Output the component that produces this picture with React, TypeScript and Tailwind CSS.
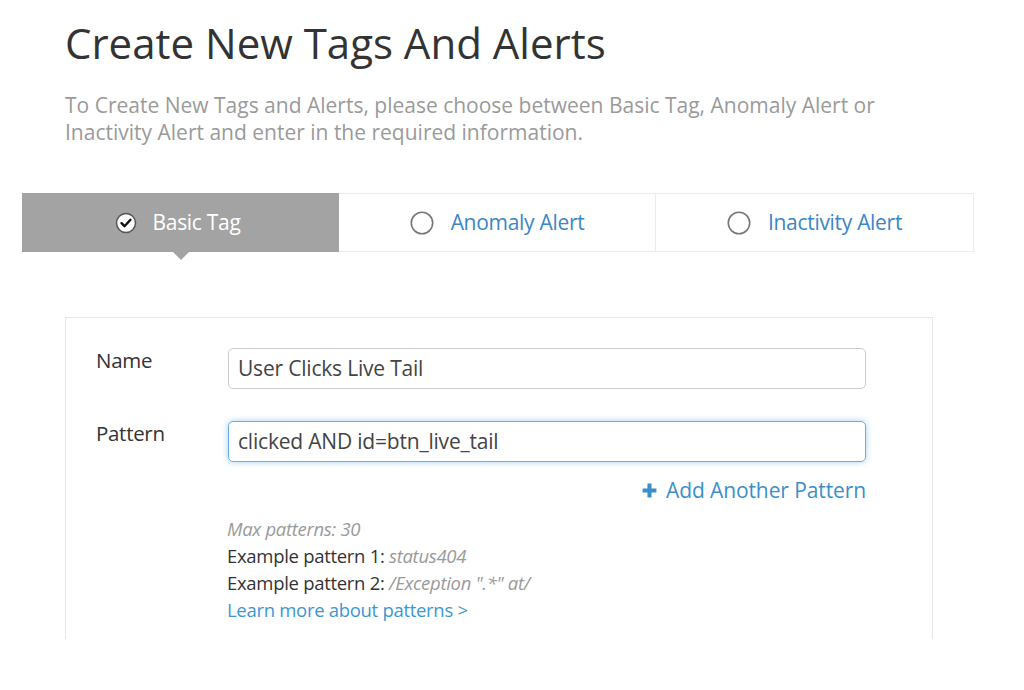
import React from 'react';

const CheckCircle = () => (
  <svg width="22" height="22" viewBox="0 0 22 22" className="mr-[16px]">
    <circle cx="11" cy="11" r="9.5" fill="#ffffff" stroke="#555555" strokeWidth="1.5" />
    <path d="M6.5 11.2l3 3 6-6.4" fill="none" stroke="#111111" strokeWidth="2.4" strokeLinecap="round" strokeLinejoin="round" />
  </svg>
);

const RadioCircle = () => (
  <svg width="24" height="24" viewBox="0 0 24 24" className="mr-[17px]">
    <circle cx="12" cy="12" r="10.7" fill="#ffffff" stroke="#777777" strokeWidth="1.6" />
  </svg>
);

const App = () => {
  return (
    <div className="w-[1024px] h-[690px] bg-white overflow-hidden font-['Open_Sans',sans-serif]">
      {/* Header */}
      <div className="pl-[65px] pt-[15px]">
        <h1 className="text-[42px] leading-[56px] text-[#333333] font-normal">
          Create New Tags And Alerts
        </h1>
        <p className="mt-[21px] text-[21px] leading-[27px] text-[#9a9a9a] w-[840px]">
          To Create New Tags and Alerts, please choose between Basic Tag, Anomaly Alert or
          Inactivity Alert and enter in the required information.
        </p>
      </div>

      {/* Tabs */}
      <div className="ml-[22px] mt-[47px] w-[952px] h-[59px] flex border border-[#ececec]">
        <div className="relative w-[317px] -ml-px -mt-px h-[59px] bg-[#a3a3a3] flex items-center justify-center">
          <CheckCircle />
          <span className="text-[21px] text-white pr-[6px] tracking-[-0.3px]">Basic Tag</span>
          <div className="absolute left-1/2 -bottom-[8px] -ml-[8px] w-0 h-0 border-l-[8px] border-r-[8px] border-t-[8px] border-l-transparent border-r-transparent border-t-[#a3a3a3]" />
        </div>
        <div className="w-[317px] flex items-center justify-center border-r border-[#ececec]">
          <RadioCircle />
          <span className="text-[21px] text-[#3b86c6] tracking-[-0.3px]">Anomaly Alert</span>
        </div>
        <div className="flex-1 flex items-center justify-center">
          <RadioCircle />
          <span className="text-[21px] text-[#3b86c6] tracking-[-0.3px]">Inactivity Alert</span>
        </div>
      </div>

      {/* Form card */}
      <div className="ml-[65px] mt-[65px] w-[868px] h-[322px] border border-b-0 border-[#e6e6e6] pt-[30px] pr-[66px]">
        <div className="flex items-center h-[41px]">
          <label className="w-[162px] pl-[30px] text-[20.5px] text-[#333333] -mt-[16px] tracking-[-0.3px]">Name</label>
          <div className="flex-1 h-[41px] border border-[#cccccc] rounded-[5px] flex items-center px-[9px] text-[21px] text-[#444444] tracking-[-0.2px]">
            User Clicks Live Tail
          </div>
        </div>
        <div className="flex items-center h-[41px] mt-[32px]">
          <label className="w-[162px] pl-[30px] text-[20.5px] text-[#333333] -mt-[16px] tracking-[-0.3px]">Pattern</label>
          <div className="flex-1 h-[41px] border border-[#66afe9] rounded-[5px] shadow-[0_0_6px_rgba(102,175,233,0.6)] flex items-center px-[9px] text-[21px] text-[#444444] tracking-[-0.2px]">
            clicked AND id=btn_live_tail
          </div>
        </div>
        <div className="flex justify-end mt-[15px]">
          <span className="flex items-center text-[21px] text-[#3b8fc8] leading-[26px] tracking-[-0.1px]">
            <svg width="17" height="17" viewBox="0 0 16 16" className="mr-[8px]">
              <path d="M8 1.5v13M1.5 8h13" stroke="#3b8fc8" strokeWidth="3.8" />
            </svg>
            Add Another Pattern
          </span>
        </div>
        <div className="pl-[161px] mt-[12px] text-[18.5px] leading-[27px] tracking-[-0.3px]">
          <div className="italic text-[#9a9a9a]">Max patterns: 30</div>
          <div className="text-[#333333]">
            Example pattern 1: <span className="italic text-[#9a9a9a]">status404</span>
          </div>
          <div className="text-[#333333]">
            Example pattern 2: <span className="italic text-[#9a9a9a]">/Exception ".*" at/</span>
          </div>
          <div className="text-[#3b97cf]">Learn more about patterns &gt;</div>
        </div>
      </div>
    </div>
  );
};

export default App;
